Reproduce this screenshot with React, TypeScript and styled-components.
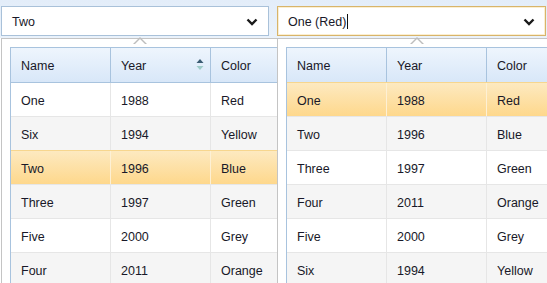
import styled, { createGlobalStyle, css } from "styled-components";

const GlobalStyle = createGlobalStyle`
    html, body {
        margin: 0;
        padding: 0;
        overflow: hidden;
    }
    body {
        font-family: "Liberation Sans", Arial, sans-serif;
        background: #ffffff;
    }
`;

const Page = styled.div`
    display: flex;
    width: 547px;
    height: 283px;
    padding: 6px 0 0 1px;
    box-sizing: border-box;
    overflow: hidden;
    background: linear-gradient(#e3edf9 0px, #eaf2fb 38px, #ffffff 38px);
`;

const Column = styled.div<{ $width: number; $front?: boolean }>`
    display: flex;
    flex-direction: column;
    flex: 0 0 ${(p) => p.$width}px;
    min-width: 0;
    position: relative;
    z-index: ${(p) => (p.$front ? 2 : 1)};
`;

const Combo = styled.div<{ $focused?: boolean; $width: number }>`
    display: flex;
    align-items: center;
    justify-content: space-between;
    width: ${(p) => p.$width}px;
    height: 30px;
    box-sizing: border-box;
    padding: 1px 10px 0 10px;
    background: #fff;
    border: 1px solid #a9c1d9;
    font-size: 12.5px;
    color: #181828;
    ${(p) =>
        p.$focused &&
        css`
            border-color: #d8b46a;
            box-shadow: inset 0 0 0 1px #fbefd2;
        `}
`;

const ComboText = styled.span`
    display: flex;
    align-items: center;
`;

const Caret = styled.span`
    display: inline-block;
    width: 1px;
    height: 15px;
    margin-left: 1px;
    background: #111;
`;

const Popup = styled.div<{ $width: number }>`
    position: relative;
    margin-top: 2px;
    flex: 1;
    width: ${(p) => p.$width}px;
    background: #fff;
    border: 1px solid #c4c4c4;
    border-bottom: none;
    padding: 8px 0 0 8px;
    overflow: hidden;
    box-sizing: border-box;
`;

const PopupArrow = styled.div<{ $left: number }>`
    position: absolute;
    top: 31px;
    left: ${(p) => p.$left}px;
    z-index: 3;
    width: 0;
    height: 0;
    border-left: 7px solid transparent;
    border-right: 7px solid transparent;
    border-bottom: 7px solid #bdbdbd;

    &::after {
        content: "";
        position: absolute;
        left: -6px;
        top: 1.5px;
        border-left: 6px solid transparent;
        border-right: 6px solid transparent;
        border-bottom: 6px solid #fff;
    }
`;

const Grid = styled.div`
    width: 301px;
    border-top: 1px solid #a8c3de;
    border-left: 1px solid #a8c3de;
`;

const HeaderRow = styled.div`
    display: grid;
    grid-template-columns: 100px 100px 100px;
    height: 35px;
    box-sizing: border-box;
    border-bottom: 1px solid #a8c3de;
    background: linear-gradient(#eef5fd, #d8e7f8);
`;

const HeaderCell = styled.div`
    position: relative;
    display: flex;
    align-items: center;
    padding: 2px 0 0 10px;
    border-right: 1px solid #a8c3de;
    font-size: 12.5px;
    color: #181828;
`;

const SortIcon = styled.svg`
    position: absolute;
    right: 6px;
    top: 10px;
`;

const Row = styled.div<{ $alt?: boolean; $selected?: boolean }>`
    display: grid;
    grid-template-columns: 100px 100px 100px;
    height: 34px;
    box-sizing: border-box;
    border-bottom: 1px solid #e6e6e6;
    background: ${(p) => (p.$alt ? "#f5f5f5" : "#ffffff")};
    ${(p) =>
        p.$selected &&
        css`
            background: linear-gradient(#fde9c0, #fed88c);
            border-top: 1px solid #f7d68e;
            margin-top: -1px;
            height: 35px;
        `}
`;

const Cell = styled.div<{ $selected?: boolean }>`
    display: flex;
    align-items: center;
    padding: 2px 0 0 10px;
    border-right: 1px solid ${(p) => (p.$selected ? "#fdf0d4" : "#e6e6e6")};
    font-size: 12.5px;
    color: #181828;
`;

type Item = { name: string; year: number; color: string };

const leftItems: Item[] = [
    { name: "One", year: 1988, color: "Red" },
    { name: "Six", year: 1994, color: "Yellow" },
    { name: "Two", year: 1996, color: "Blue" },
    { name: "Three", year: 1997, color: "Green" },
    { name: "Five", year: 2000, color: "Grey" },
    { name: "Four", year: 2011, color: "Orange" },
];

const rightItems: Item[] = [
    { name: "One", year: 1988, color: "Red" },
    { name: "Two", year: 1996, color: "Blue" },
    { name: "Three", year: 1997, color: "Green" },
    { name: "Four", year: 2011, color: "Orange" },
    { name: "Five", year: 2000, color: "Grey" },
    { name: "Six", year: 1994, color: "Yellow" },
];

function Chevron() {
    return (
        <svg width="12" height="8" viewBox="0 0 12 8">
            <path d="M1.5 1.5 L6 6 L10.5 1.5" fill="none" stroke="#1a1a1a" strokeWidth="2.4" />
        </svg>
    );
}

function DataGrid(props: { items: Item[]; selected: string; sorted?: boolean }) {
    return (
        <Grid>
            <HeaderRow>
                <HeaderCell>Name</HeaderCell>
                <HeaderCell>
                    Year
                    {props.sorted && (
                        <SortIcon width="8" height="13" viewBox="0 0 8 13">
                            <path d="M4 1 L7.5 5 L0.5 5 Z" fill="#3b5b72" />
                            <path d="M4 12 L7.5 8 L0.5 8 Z" fill="#9ecbc8" />
                        </SortIcon>
                    )}
                </HeaderCell>
                <HeaderCell>Color</HeaderCell>
            </HeaderRow>
            {props.items.map((item, i) => {
                const sel = item.name === props.selected;
                return (
                    <Row key={item.name} $alt={i % 2 === 1} $selected={sel}>
                        <Cell $selected={sel}>{item.name}</Cell>
                        <Cell $selected={sel}>{item.year}</Cell>
                        <Cell $selected={sel}>{item.color}</Cell>
                    </Row>
                );
            })}
        </Grid>
    );
}

export default function App() {
    return (
        <>
            <GlobalStyle />
            <Page>
                <Column $width={276}>
                    <Combo $width={268}>
                        <ComboText>Two</ComboText>
                        <Chevron />
                    </Combo>
                    <PopupArrow $left={132} />
                    <Popup $width={286}>
                        <DataGrid items={leftItems} selected="Two" sorted />
                    </Popup>
                </Column>
                <Column $width={270} $front>
                    <Combo $width={269} $focused>
                        <ComboText>
                            One (Red)
                            <Caret />
                        </ComboText>
                        <Chevron />
                    </Combo>
                    <PopupArrow $left={133} />
                    <Popup $width={290}>
                        <DataGrid items={rightItems} selected="One" />
                    </Popup>
                </Column>
            </Page>
        </>
    );
}
